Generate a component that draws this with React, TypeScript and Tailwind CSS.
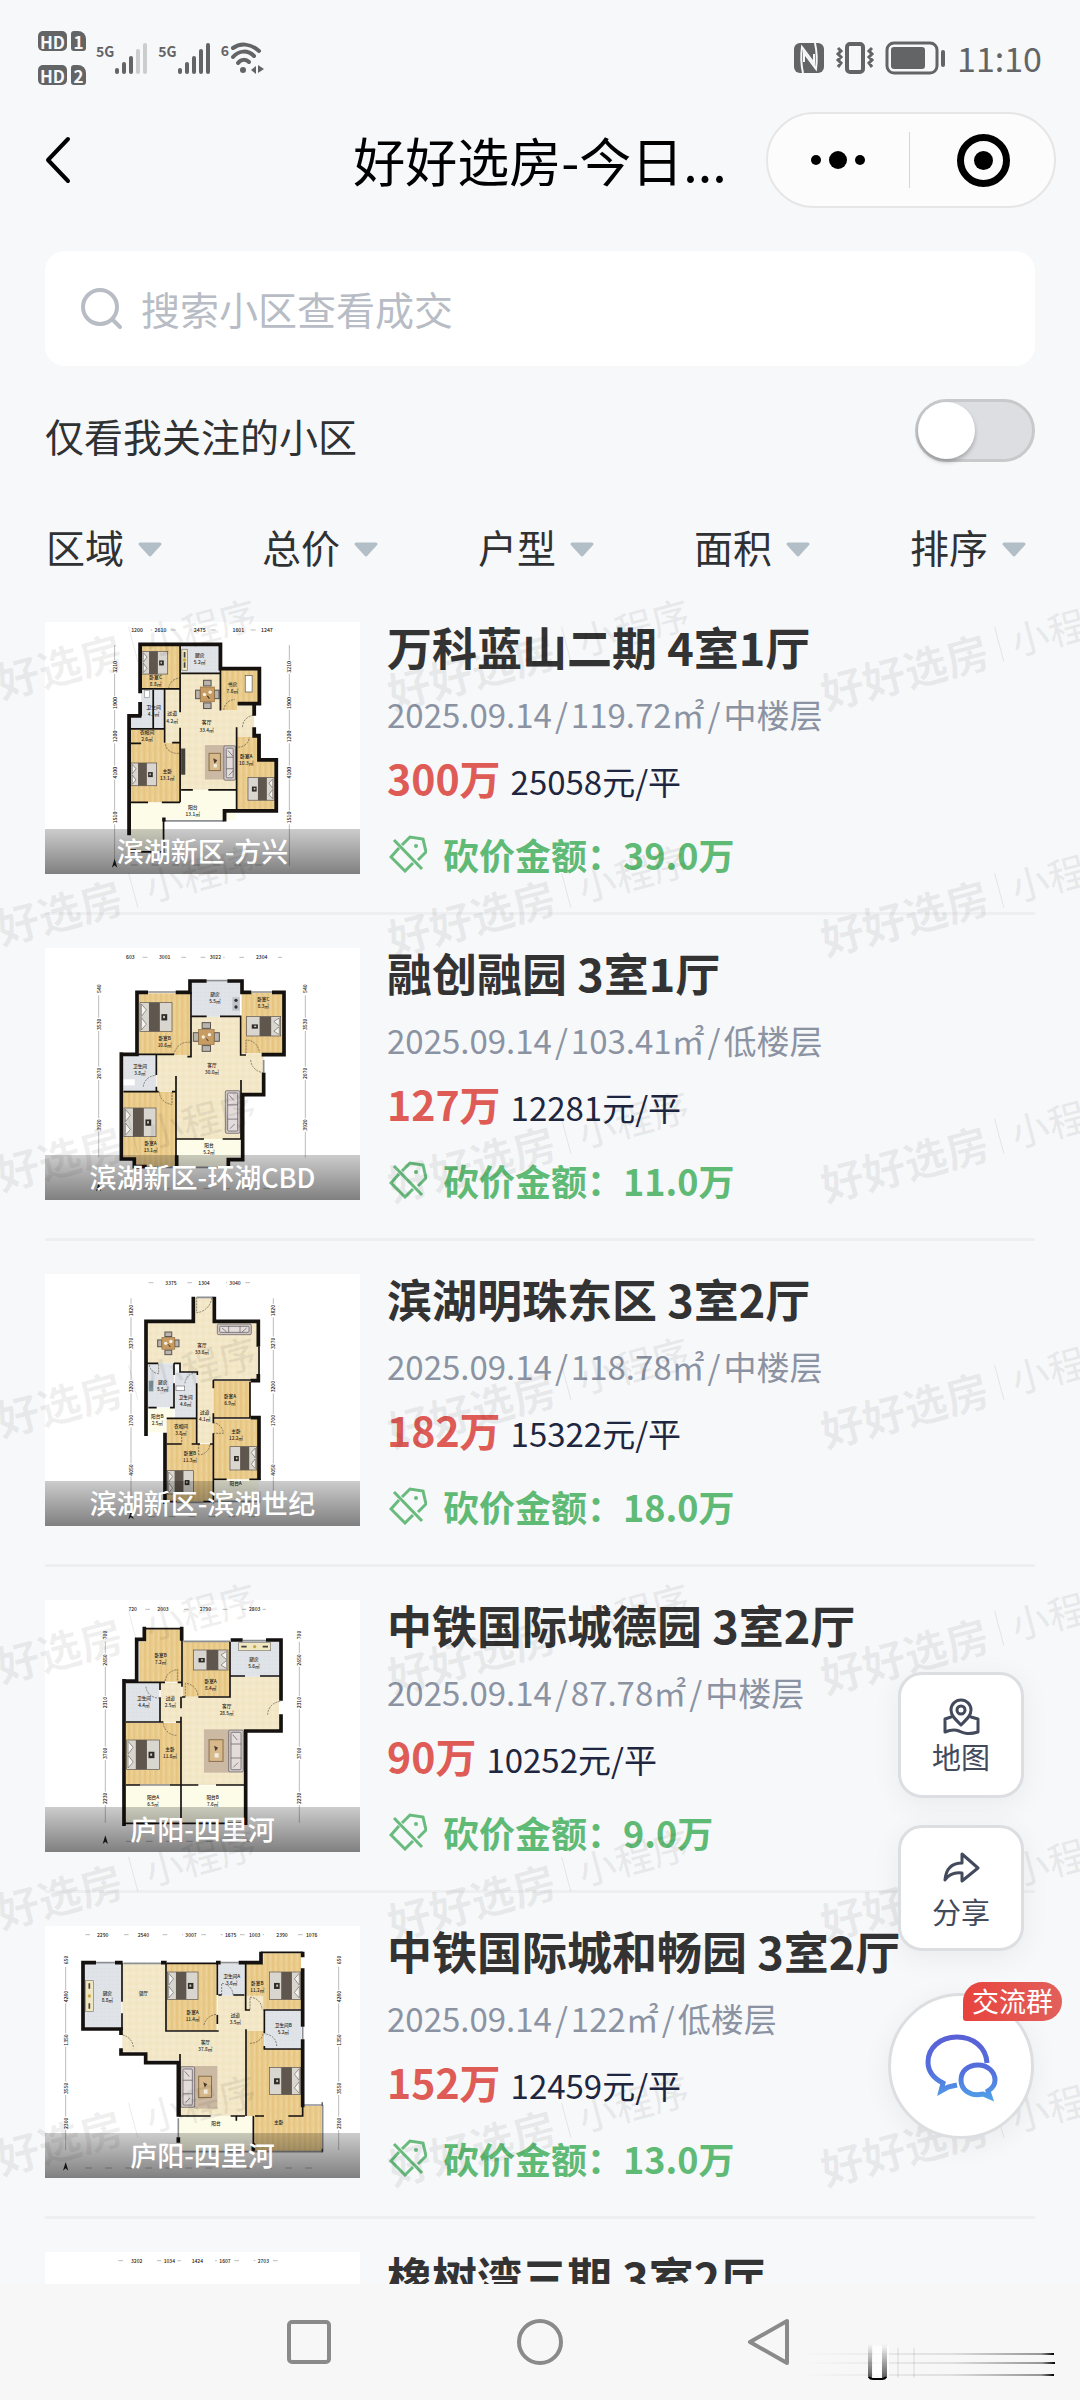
import { useState } from "react"
import type { ReactNode } from "react"

interface Label {
	x: number
	y: number
	name: string
	area: string
}

interface Dimensions {
	topY: number
	topX: [number, number]
	top: [number, string][]
	sideY: [number, number]
	leftX: number
	rightX: number
	side: [number, string][]
	bottomY: number
}

interface Plan {
	viewBox: string
	wood: string
	cream: string
	tile: string
	balcony: string
	walls: string
	partitions: string
	windows: string
	doors: string
	labels: Label[]
	dims: Dimensions
	furniture: ReactNode
}

interface Listing {
	id: number
	title: string
	date: string
	area: string
	floor: string
	price: string
	unitPrice: string
	discount: string
	district: string
	plan?: Plan
}

interface PieceProps {
	x: number
	y: number
	w: number
	h: number
	flip?: boolean
}

/* ---------- floor plan furniture ---------- */

function Bed({ x, y, w, h, flip }: PieceProps) {
	return (
		<g transform={flip ? `translate(${x + w} ${y}) scale(-1 1)` : `translate(${x} ${y})`}>
			<rect width={w} height={h} fill="#d9d6d0" stroke="#57504a" strokeWidth="2" />
			<rect x={w * 0.28} width={w * 0.34} height={h} fill="#5f564e" />
			<path d={`M4 4 L${w * 0.2} ${h * 0.25} L4 ${h * 0.48} Z`} fill="#f5f3ef" stroke="#6b655f" strokeWidth="2" />
			<path d={`M4 ${h * 0.52} L${w * 0.2} ${h * 0.75} L4 ${h - 4} Z`} fill="#f5f3ef" stroke="#6b655f" strokeWidth="2" />
			<rect x={w * 0.67} y={h * 0.4} width={w * 0.18} height={h * 0.22} fill="#2f2b28" />
			<rect x={w * 0.72} y={h * 0.46} width={w * 0.06} height={h * 0.08} fill="#c9c4bc" />
		</g>
	)
}

function Sofa({ x, y, w, h }: PieceProps) {
	const tall = h > w
	return (
		<g transform={`translate(${x} ${y})`} stroke="#5a5356" strokeWidth="2" fill="#cfc6c6">
			<rect width={w} height={h} rx="4" />
			<rect x="7" y="7" width={w - 14} height={h - 14} rx="3" fill="#e3dcdb" />
			{tall ? (
				<path d={`M7 ${h / 3} H${w - 6} M7 ${(h * 2) / 3} H${w - 6} M12 14 l14 16 M14 ${h - 14} l14 -14`} />
			) : (
				<path d={`M${w / 3} 7 V${h - 6} M${(w * 2) / 3} 7 V${h - 6} M14 12 l14 12 M${w - 14} 12 l-14 12`} />
			)}
		</g>
	)
}

function DiningTable({ x, y, w, h }: PieceProps) {
	return (
		<g transform={`translate(${x} ${y})`}>
			<g fill="#b9b4ad" stroke="#5a5450" strokeWidth="3">
				<rect x={w * 0.34} y="0" width={w * 0.32} height={h * 0.2} />
				<rect x={w * 0.34} y={h * 0.8} width={w * 0.32} height={h * 0.2} />
				<rect x="0" y={h * 0.35} width={w * 0.2} height={h * 0.3} />
				<rect x={w * 0.8} y={h * 0.35} width={w * 0.2} height={h * 0.3} />
			</g>
			<rect x={w * 0.2} y={h * 0.24} width={w * 0.6} height={h * 0.52} fill="#c69c62" stroke="#8f6c3f" strokeWidth="2" />
			<circle cx={w * 0.38} cy={h * 0.5} r="5" fill="#f7f1e4" />
			<circle cx={w * 0.62} cy={h * 0.42} r="5" fill="#f7f1e4" />
			<path d={`M${w * 0.5} ${h * 0.55} l6 8`} stroke="#3d3328" strokeWidth="3" />
		</g>
	)
}

function Rug({ x, y, w, h }: PieceProps) {
	return (
		<g transform={`translate(${x} ${y})`}>
			<rect width={w} height={h} fill="#cbb9a3" />
			<rect x={w * 0.2} y={h * 0.24} width={w * 0.55} height={h * 0.5} fill="#d7b98c" stroke="#8a704a" strokeWidth="3" />
			<path d={`M${w * 0.4} ${h * 0.38} l12 6 l-8 10 z`} fill="#4a3c30" />
			<rect x={w * 0.42} y={h * 0.55} width={w * 0.16} height={h * 0.1} fill="#f2ebdf" />
		</g>
	)
}

function Counter({ x, y, w, h }: PieceProps) {
	return (
		<g transform={`translate(${x} ${y})`}>
			<rect width={w} height={h} fill="#f0e6c0" stroke="#7b7a74" strokeWidth="2" />
			<circle cx={w / 2} cy={h / 2} r="5" fill="#c7a94e" />
			<path d={w > h ? `M8 ${h / 2} h16 M${w - 24} ${h / 2} h16` : `M${w / 2} 8 v16 M${w / 2} ${h - 24} v16`} stroke="#44423e" strokeWidth="5" />
		</g>
	)
}

/* ---------- floor plans ---------- */

const vankePlan: Plan = {
	viewBox: "131 703 914 731",
	wood: "M408 768h115v128h-115z M640 840h112v100h-62v18h-50z M380 1015h95v38h48v173h-143z M688 1035h65v70h50v145h-115z",
	cream: "M523 852h117v106h48v-13h50v90h-50v155h-165v-137h-45v-157h45z",
	tile: "M526 768h112v84h-112z M410 900h68v112h-98v-37h30z",
	balcony: "M526 1190h160v86h-211v90h-95v-138h146z",
	walls: "M411 975H375V1322 M407 975V935 M407 910V768H640V838H753V940H690 M738 975V945 M738 1008V1033H752V1103H802V1251H652V1282 M471 1276h10 M375 1368h20",
	partitions:
		"M523 768V965 M410 897H523 M526 852H640 M640 838V960 M478 897V1053 M445 900V1013 M375 1013H480 M380 1055H410 M500 1053H523 M523 1010V1226 M380 1226H430 M470 1226H523 M526 1190H560 M605 1190H687 M687 1008V1250 M475 1276V1370H395",
	windows: "M435 768h58 M560 768h50 M475 1280H650 M725 1250h50",
	doors: "M490 896a32 32 0 0 1 32 -30 M704 1008a34 34 0 0 1 34 -34 M480 1058a36 30 0 0 0 40 26 M650 958a32 32 0 0 1 32 -30 M692 1066a32 32 0 0 0 32 -28",
	labels: [
		{ x: 452, y: 867, name: "卧室C", area: "8.8㎡" },
		{ x: 580, y: 804, name: "厨房", area: "5.2㎡" },
		{ x: 675, y: 888, name: "书房", area: "7.6㎡" },
		{ x: 446, y: 956, name: "卫生间", area: "4.3㎡" },
		{ x: 500, y: 974, name: "过道", area: "4.2㎡" },
		{ x: 600, y: 1000, name: "客厅", area: "33.4㎡" },
		{ x: 427, y: 1028, name: "衣帽间", area: "2.6㎡" },
		{ x: 486, y: 1140, name: "主卧", area: "13.1㎡" },
		{ x: 715, y: 1098, name: "卧室A", area: "10.3㎡" },
		{ x: 560, y: 1246, name: "阳台", area: "13.1㎡" },
	],
	dims: {
		topY: 726,
		topX: [380, 800],
		top: [[398, "1200"], [466, "2610"], [580, "2475"], [692, "1601"], [775, "1247"]],
		sideY: [770, 1410],
		leftX: 333,
		rightX: 840,
		side: [[833, "3210"], [938, "1900"], [1035, "1200"], [1140, "4100"], [1270, "1510"]],
		bottomY: 1408,
	},
	furniture: (
		<>
			<Bed x={412} y={788} w={75} h={66} />
			<Bed x={380} y={1112} w={75} h={66} />
			<Bed x={720} y={1154} w={76} h={66} flip />
			<DiningTable x={568} y={872} w={68} h={82} />
			<Rug x={595} y={1060} w={60} h={100} />
			<Sofa x={650} y={1062} w={34} h={100} />
			<rect x={526} y={1070} width={12} height={76} fill="#44403c" />
			<rect x={712} y={858} width={20} height={48} fill="#fff" stroke="#555" strokeWidth="2" />
			<Counter x={528} y={782} w={16} h={62} />
			<rect x={420} y={902} width={14} height={20} fill="#fff" stroke="#999" strokeWidth="2" />
		</>
	),
}

const sunacPlan: Plan = {
	viewBox: "135 84 945 756",
	wood: "M415 220h157v185h-157z M725 218h125v182h-125z M370 515h158v225h-120v-25h-38z",
	cream: "M575 290h148v110h68v120h-66v137h-195v-142h-60v-110h105z",
	tile: "M575 185h145v105h-145z M368 405h100v108h-100z",
	balcony: "M532 657h190v60h-35v25h-155z",
	walls: "M364 397V717H403V740H440 M364 403H411V217H444 M527 217H570V183H620 M682 183H726V217H754 M816 217H852V404H785 M791 458V524H728V719H685V740 M530 706V740",
	partitions:
		"M573 217V410H562 M575 289H620 M660 289H722V405H738 M410 403H522 M469 405V465 M469 500V515 M370 515H476 M516 515H528 M528 468V740 M723 480V657 M530 657H612 M668 657H723",
	windows: "M444 216h83 M620 182h62 M754 216h62 M440 742H530 M575 742H685 M791 420v40",
	doors: "M522 405a42 42 0 0 1 48 -38 M738 400V360a40 40 0 0 1 40 38 M752 420a42 40 0 0 0 40 38 M430 500a40 36 0 0 1 38 -34 M478 515a40 38 0 0 0 38 38V515",
	labels: [
		{ x: 494, y: 360, name: "卧室B", area: "10.6㎡" },
		{ x: 645, y: 228, name: "厨房", area: "5.5㎡" },
		{ x: 790, y: 243, name: "卧室C", area: "8.3㎡" },
		{ x: 420, y: 444, name: "卫生间", area: "3.8㎡" },
		{ x: 636, y: 442, name: "客厅", area: "30.0㎡" },
		{ x: 452, y: 676, name: "卧室A", area: "13.1㎡" },
		{ x: 627, y: 680, name: "阳台", area: "5.2㎡" },
	],
	dims: {
		topY: 112,
		topX: [370, 846],
		top: [[391, "603"], [494, "3001"], [646, "3022"], [785, "2304"]],
		sideY: [195, 712],
		leftX: 296,
		rightX: 916,
		side: [[206, "540"], [313, "3530"], [460, "2070"], [615, "3920"]],
		bottomY: 806,
	},
	furniture: (
		<>
			<Bed x={420} y={248} w={96} h={86} />
			<Bed x={740} y={290} w={102} h={58} flip />
			<Bed x={372} y={564} w={96} h={86} />
			<DiningTable x={580} y={308} w={78} h={86} />
			<Sofa x={676} y={512} w={44} h={128} />
			<rect x={697} y={232} width={22} height={40} fill="#bfc4cb" />
			<circle cx={708} cy={241} r="5" fill="#333" />
			<circle cx={708} cy={261} r="5" fill="#333" />
			<rect x={370} y={478} width={34} height={18} fill="#fff" />
		</>
	),
}

const mingzhuPlan: Plan = {
	viewBox: "135 72 945 756",
	wood: "M640 392h110v112h-110z M640 508h135v180h-135z M500 505h90v77h48v173h-138z",
	cream: "M583 142h58v73h134v172h-135v193h-50v-215h-50v-25h-98v-125h141z",
	tile: "M442 340h80v132h-80z M525 368h65v135h-65z",
	balcony: "M445 475h75v30h-22v42h-53z M640 690h135v62h-135z",
	walls: "M438 558V214H580V140 M643 140V214H775V290 M775 372V392H752 M752 503H777V690 M495 548V762",
	partitions:
		"M777 290V375 M640 390H770 M750 395V503 M640 504H752 M640 390V415 M640 490V520 M640 550V760 M440 340H475 M522 340V375 M522 340H540V366H592V375 M522 400V473H510 M590 400V505H500 M445 473H470 M500 582H545 M575 582H590V505 M590 582H600 M630 582H640 M500 755H530 M610 755H640 M640 688H680 M748 688H782 M778 725V760",
	windows: "M590 142h50 M530 757h80 M640 754H778",
	doors: "M590 142V188a50 48 0 0 0 45 -45 M640 518a34 34 0 0 1 30 32H640 M555 400a34 34 0 0 1 34 -32 M596 615V582 M630 585a36 36 0 0 1 -32 30 M545 552V582 M448 345a30 30 0 0 0 28 26V342",
	labels: [
		{ x: 606, y: 290, name: "客厅", area: "33.6㎡" },
		{ x: 488, y: 402, name: "厨房", area: "5.5㎡" },
		{ x: 557, y: 448, name: "卫生间", area: "4.6㎡" },
		{ x: 614, y: 492, name: "过道", area: "4.1㎡" },
		{ x: 690, y: 444, name: "卧室A", area: "6.9㎡" },
		{ x: 472, y: 504, name: "阳台B", area: "2.5㎡" },
		{ x: 543, y: 534, name: "衣帽间", area: "3.8㎡" },
		{ x: 708, y: 548, name: "主卧", area: "12.2㎡" },
		{ x: 570, y: 614, name: "卧室B", area: "11.3㎡" },
		{ x: 707, y: 706, name: "阳台A", area: "" },
	],
	dims: {
		topY: 98,
		topX: [446, 772],
		top: [[513, "3375"], [612, "1304"], [705, "3040"]],
		sideY: [145, 740],
		leftX: 393,
		rightX: 820,
		side: [[182, "1820"], [280, "3270"], [410, "3200"], [512, "1700"], [660, "4050"]],
		bottomY: 800,
	},
	furniture: (
		<>
			<DiningTable x={473} y={246} w={64} h={68} />
			<Sofa x={652} y={222} w={102} h={32} />
			<Bed x={690} y={590} w={80} h={70} flip />
			<Bed x={502} y={662} w={78} h={70} />
			<rect x={446} y={392} width={14} height={32} fill="#7d9098" />
			<rect x={528} y={408} width={26} height={14} fill="#fff" stroke="#777" strokeWidth="2" />
		</>
	),
}

const deyuanPlan: Plan = {
	viewBox: "135 60 945 756",
	wood: "M437 148h106v157h-125v-120h19z M548 185h140v165h-140z M378 428h165v187h-165z",
	cream: "M482 308h63v42h147v-60h145v160h-102v165h-190v-189h-63z",
	tile: "M692 183h145v107h-145z M378 308h100v118h-100z",
	balcony: "M378 617h163v112h-163z M545 617h190v112h-190z",
	walls: "M372 297V738 M368 303H410V178H433V140 M545 140V182 M692 180H728 M798 180H843V362 M843 403V453H737V735",
	partitions:
		"M433 146H545 M546 180V310 M690 185V351H595 M546 351H556 M546 320V308 M692 288H735 M780 288H840 M378 307H495 M533 307H545 M480 307V330 M480 352V426 M378 426H490 M528 426H545 M543 350V385 M543 410V735 M378 615H420 M510 615H595 M648 615H735 M372 730H737",
	windows: "M550 184H690 M728 182h70 M420 615h90 M385 303h20",
	doors: "M495 303a40 38 0 0 1 38 -34V303 M556 350V310a40 40 0 0 1 38 38 M438 320a38 36 0 0 0 40 34 M803 404a42 40 0 0 1 40 -40 M490 428a40 38 0 0 0 40 38",
	labels: [
		{ x: 482, y: 230, name: "卧室B", area: "7.2㎡" },
		{ x: 762, y: 244, name: "厨房", area: "5.6㎡" },
		{ x: 632, y: 308, name: "卧室A", area: "8.4㎡" },
		{ x: 432, y: 360, name: "卫生间", area: "4.4㎡" },
		{ x: 511, y: 360, name: "过道", area: "2.5㎡" },
		{ x: 680, y: 384, name: "客厅", area: "28.5㎡" },
		{ x: 510, y: 514, name: "主卧", area: "11.6㎡" },
		{ x: 459, y: 656, name: "阳台A", area: "6.5㎡" },
		{ x: 638, y: 656, name: "阳台B", area: "7.6㎡" },
	],
	dims: {
		topY: 88,
		topX: [378, 838],
		top: [[398, "720"], [489, "2003"], [616, "2790"], [764, "2803"]],
		sideY: [155, 728],
		leftX: 316,
		rightX: 898,
		side: [[165, "700"], [240, "2650"], [368, "2310"], [520, "3700"], [655, "2230"]],
		bottomY: 784,
	},
	furniture: (
		<>
			<Bed x={580} y={210} w={104} h={60} flip />
			<Bed x={380} y={480} w={98} h={88} />
			<Rug x={612} y={448} w={76} h={130} />
			<Sofa x={686} y={450} w={44} h={126} />
			<Counter x={716} y={188} w={96} h={24} />
		</>
	),
}

const hechangPlan: Plan = {
	viewBox: "135 78 945 756",
	wood: "M500 192h150v200h-150z M790 160h113v168h-165v-136h52z M740 392h52v55h113v171h60v135h-205v-105h-20z",
	cream: "M367 190h131v205h155v-108h137v105h-54v255h-196v-167h-103v-25h-70z",
	tile: "M252 190h112v192h-112z M655 192h80v95h-80z M793 332h110v113h-110z",
	balcony: "M540 648h217v103h-217z",
	walls: "M288 188H249V387H363V405 M345 188H368 M363 445V462H437V488H535V650 M483 188H500 M648 188H662 M716 188H783V155 M908 155V172 M908 205V380 M908 418V622 M535 712V728 M965 612H968 M965 752H968 M760 730V752",
	partitions:
		"M783 157H908 M366 190V270 M366 305V270 M366 340V390 M500 190H650 M498 190V393H656 M652 190V285 M652 345V372 M655 285H665 M700 285H733 M737 190V330H750 M790 330H908 M738 388V648 M793 332V400 M793 438V447H908 M540 462V650 M540 648H632 M692 648H735 M709 648V662 M760 648V752 M765 648H792 M865 648H908V620",
	windows: "M288 188h57 M370 190H483 M662 188h54 M535 655V712 M540 755H965 M968 615V755 M910 615H965 M908 380v38",
	doors: "M368 405a40 40 0 0 1 32 40 M612 375a42 38 0 0 1 40 -32 M665 285V250a36 36 0 0 1 34 34 M750 328V292a36 36 0 0 1 36 36 M830 438a36 36 0 0 0 -36 -36 M750 430a40 36 0 0 0 40 -30",
	labels: [
		{ x: 322, y: 284, name: "厨房", area: "8.8㎡" },
		{ x: 430, y: 286, name: "餐厅", area: "" },
		{ x: 578, y: 342, name: "卧室A", area: "11.4㎡" },
		{ x: 695, y: 234, name: "卫生间A", area: "3.6㎡" },
		{ x: 772, y: 254, name: "卧室B", area: "11.2㎡" },
		{ x: 706, y: 350, name: "过道", area: "3.5㎡" },
		{ x: 850, y: 380, name: "卫生间B", area: "5.2㎡" },
		{ x: 616, y: 432, name: "客厅", area: "37.8㎡" },
		{ x: 648, y: 676, name: "阳台", area: "" },
		{ x: 836, y: 672, name: "主卧", area: "" },
	],
	dims: {
		topY: 104,
		topX: [256, 960],
		top: [[308, "2290"], [430, "2540"], [573, "3007"], [692, "1675"], [764, "1003"], [846, "2390"], [935, "1076"]],
		sideY: [162, 750],
		leftX: 197,
		rightX: 1016,
		side: [[180, "650"], [290, "4280"], [420, "1350"], [565, "3550"], [670, "2300"]],
		bottomY: 804,
	},
	furniture: (
		<>
			<Bed x={502} y={216} w={92} h={82} />
			<Bed x={808} y={216} w={94} h={82} flip />
			<Bed x={808} y={502} w={94} h={82} flip />
			<Rug x={582} y={498} w={70} h={128} />
			<Sofa x={542} y={500} w={42} h={122} />
			<Counter x={256} y={242} w={24} h={92} />
		</>
	),
}

const xiangshuPlan: Plan = {
	viewBox: "135 78 945 756",
	wood: "",
	cream: "",
	tile: "",
	balcony: "",
	walls: "",
	partitions: "",
	windows: "",
	doors: "",
	labels: [],
	dims: {
		topY: 104,
		topX: [355, 858],
		top: [[410, "3202"], [508, "1034"], [592, "1424"], [675, "1607"], [790, "2703"]],
		sideY: [250, 700],
		leftX: 300,
		rightX: 900,
		side: [],
		bottomY: 804,
	},
	furniture: null,
}

function FloorPlan({ plan }: { plan: Plan }) {
	const { dims } = plan
	return (
		<svg viewBox={plan.viewBox} className="block size-full" aria-hidden="true">
			<defs>
				<pattern id="wood" width="16" height="40" patternUnits="userSpaceOnUse">
					<rect width="16" height="40" fill="#ebcd90" />
					<rect width="6" height="40" fill="#e6c580" />
					<rect x="11" width="2" height="26" fill="#f0d7a0" />
				</pattern>
				<pattern id="cream" width="20" height="20" patternUnits="userSpaceOnUse">
					<rect width="20" height="20" fill="#f4e9cb" />
					<path d="M0 10 L10 0 L20 10 L10 20 Z" fill="#f1e5c3" />
				</pattern>
				<pattern id="tile" width="12" height="12" patternUnits="userSpaceOnUse">
					<rect width="12" height="12" fill="#e0e3e7" />
					<path d="M0 0H12M0 0V12" stroke="#d4d8dd" strokeWidth="1" />
				</pattern>
			</defs>

			{/* Dimension lines */}
			<g stroke="#9a9a9a" strokeWidth="2">
				<path d={`M${dims.topX[0]} ${dims.topY}H${dims.topX[1]}`} strokeDasharray="14 44" />
				<path d={`M${dims.topX[0]} ${dims.bottomY}H${dims.topX[1]}`} strokeDasharray="20 40" />
				<path d={`M${dims.leftX} ${dims.sideY[0]}V${dims.sideY[1]}`} />
				<path d={`M${dims.rightX} ${dims.sideY[0]}V${dims.sideY[1]}`} />
			</g>
			<g fill="#222" fontSize="15" textAnchor="middle" fontWeight="500">
				{dims.top.map(([x, value]) => (
					<g key={x}>
						<rect x={x - 24} y={dims.topY - 10} width="48" height="20" fill="#fff" />
						<text x={x} y={dims.topY + 6}>{value}</text>
					</g>
				))}
				{dims.side.map(([y, value]) =>
					[dims.leftX, dims.rightX].map((x) => (
						<g key={`${x}-${y}`} transform={`translate(${x} ${y}) rotate(-90)`}>
							<rect x="-20" y="-9" width="40" height="18" fill="#fff" />
							<text y="6">{value}</text>
						</g>
					)),
				)}
			</g>
			<path d={`M${dims.leftX} ${dims.bottomY - 18}l8 26l-8 -7l-8 7z`} fill="#222" />

			<path d={plan.wood} fill="url(#wood)" />
			<path d={plan.cream} fill="url(#cream)" />
			<path d={plan.tile} fill="url(#tile)" />
			<path d={plan.balcony} fill="#fcfce9" />
			{plan.furniture}
			<path d={plan.doors} fill="none" stroke="#5b5346" strokeWidth="2" strokeDasharray="6 3" />
			<path d={plan.windows} fill="none" stroke="#8c8f94" strokeWidth="5" />
			<path d={plan.partitions} fill="none" stroke="#14110f" strokeWidth="5" />
			<path d={plan.walls} fill="none" stroke="#14110f" strokeWidth="11" strokeLinejoin="miter" />
			<g fill="#2a2620" fontSize="14" textAnchor="middle" fontWeight="500">
				{plan.labels.map((label) => (
					<g key={`${label.x}-${label.y}`}>
						<text x={label.x} y={label.y}>{label.name}</text>
						{label.area && <text x={label.x} y={label.y + 21}>{label.area}</text>}
					</g>
				))}
			</g>
		</svg>
	)
}

/* ---------- data ---------- */

const listings: Listing[] = [
	{ id: 1, title: "万科蓝山二期 4室1厅", date: "2025.09.14", area: "119.72㎡", floor: "中楼层", price: "300万", unitPrice: "25058元/平", discount: "39.0万", district: "滨湖新区-方兴", plan: vankePlan },
	{ id: 2, title: "融创融园 3室1厅", date: "2025.09.14", area: "103.41㎡", floor: "低楼层", price: "127万", unitPrice: "12281元/平", discount: "11.0万", district: "滨湖新区-环湖CBD", plan: sunacPlan },
	{ id: 3, title: "滨湖明珠东区 3室2厅", date: "2025.09.14", area: "118.78㎡", floor: "中楼层", price: "182万", unitPrice: "15322元/平", discount: "18.0万", district: "滨湖新区-滨湖世纪", plan: mingzhuPlan },
	{ id: 4, title: "中铁国际城德园 3室2厅", date: "2025.09.14", area: "87.78㎡", floor: "中楼层", price: "90万", unitPrice: "10252元/平", discount: "9.0万", district: "庐阳-四里河", plan: deyuanPlan },
	{ id: 5, title: "中铁国际城和畅园 3室2厅", date: "2025.09.14", area: "122㎡", floor: "低楼层", price: "152万", unitPrice: "12459元/平", discount: "13.0万", district: "庐阳-四里河", plan: hechangPlan },
	{ id: 6, title: "橡树湾三期 3室2厅", date: "", area: "", floor: "", price: "", unitPrice: "", discount: "", district: "", plan: xiangshuPlan },
]

const filters = ["区域", "总价", "户型", "面积", "排序"]

/* ---------- status bar ---------- */

function SimBadge({ slot }: { slot: string }) {
	return (
		<div className="flex items-center gap-1">
			<span className="flex h-5 w-[29px] items-center justify-center rounded-[5px] bg-[#636465] text-[17px] leading-none font-bold text-[#f7f8fa]">
				HD
			</span>
			<span className="flex h-5 w-[15px] items-center justify-center rounded-[3px] rounded-tr-[8px] bg-[#636465] text-[17px] leading-none font-bold text-[#f7f8fa]">
				{slot}
			</span>
		</div>
	)
}

function Signal({ level }: { level: number }) {
	const heights = [6, 12, 18, 25, 31]
	return (
		<div className="flex items-start">
			<span className="text-[14px] leading-4 font-bold">5G</span>
			<svg width="34" height="31" viewBox="0 0 34 31" aria-hidden="true">
				{heights.map((h, i) => (
					<rect key={h} x={i * 7 + 1} y={31 - h} width="4" height={h} rx="2" fill={i < level ? "#636465" : "#cccdce"} />
				))}
			</svg>
		</div>
	)
}

function StatusBar() {
	return (
		<div className="flex h-28 items-center justify-between px-[38px] pt-1 text-[#636465]">
			<div className="flex items-center gap-[10px]">
				<div className="flex flex-col gap-[14px]">
					<SimBadge slot="1" />
					<SimBadge slot="2" />
				</div>
				<Signal level={3} />
				<Signal level={5} />
				<div className="flex items-start">
					<span className="text-[14px] leading-4 font-bold">6</span>
					<svg width="36" height="32" viewBox="0 0 36 32" fill="none" stroke="#636465" strokeWidth="4" strokeLinecap="round" aria-hidden="true">
						<path d="M4 6C11 1 21 1 30 9" />
						<path d="M4 15C10 8 19 8 25 14" />
						<path d="M9 21C12 17 17 17 20 20" />
						<circle cx="14" cy="28" r="3" fill="#636465" stroke="none" />
						<path d="M27 24V32L22 28ZM29 23V31L35 27Z" fill="#636465" stroke="none" />
					</svg>
				</div>
			</div>

			<div className="flex items-center gap-[10px]">
				<svg width="32" height="32" viewBox="0 0 32 32" aria-hidden="true">
					<rect x="1" y="1" width="30" height="30" rx="6" fill="#636465" />
					<path d="M10 31C8 22 8 12 9 5L21 21V12M22 1C24 10 24 20 23 27L11 11V20" fill="none" stroke="#f7f8fa" strokeWidth="2" />
				</svg>
				<svg width="40" height="32" viewBox="0 0 40 32" fill="none" stroke="#636465" aria-hidden="true">
					<rect x="12" y="2" width="16" height="28" rx="3" strokeWidth="4" />
					<path d="M3 6l3 3l-3 3l3 3l-3 3l3 3l-3 4M37 6l-3 3l3 3l-3 3l3 3l-3 3l3 4" strokeWidth="3" />
				</svg>
				<svg width="62" height="34" viewBox="0 0 62 34" aria-hidden="true">
					<rect x="2" y="2" width="50" height="30" rx="7" fill="none" stroke="#636465" strokeWidth="3" />
					<rect x="6" y="6" width="34" height="22" rx="3" fill="#636465" />
					<rect x="56" y="9" width="4" height="17" rx="2" fill="#636465" />
				</svg>
				<span className="text-[34px] leading-10">11:10</span>
			</div>
		</div>
	)
}

/* ---------- header ---------- */

function Header() {
	return (
		<header className="grid h-24 grid-cols-[1fr_auto_1fr] items-center px-6">
			<button type="button" aria-label="返回" className="flex size-17 items-center justify-center justify-self-start">
				<svg width="26" height="48" viewBox="0 0 26 48" fill="none" stroke="#000" strokeWidth="4" strokeLinecap="round" strokeLinejoin="round" aria-hidden="true">
					<path d="M23 3L3 24L23 45" />
				</svg>
			</button>
			<h1 className="text-[52px] leading-[64px] text-black">好好选房-今日...</h1>
			<div className="flex h-24 w-[290px] items-center justify-self-end rounded-full border-2 border-[#e6e6e7] bg-[#fcfcfd]">
				<button type="button" aria-label="更多" className="flex flex-1 items-center justify-center gap-2">
					<span className="size-[10px] rounded-full bg-black" />
					<span className="size-[18px] rounded-full bg-black" />
					<span className="size-[10px] rounded-full bg-black" />
				</button>
				<span className="h-14 w-px bg-[#d5d5d6]" />
				<button type="button" aria-label="关闭" className="flex flex-1 items-center justify-center pl-1">
					<span className="flex size-[53px] items-center justify-center rounded-full border-[7px] border-black">
						<span className="size-[19px] rounded-full bg-black" />
					</span>
				</button>
			</div>
		</header>
	)
}

function SearchBox() {
	const [keyword, setKeyword] = useState("")
	return (
		<label className="mx-[45px] mt-[43px] flex h-[115px] items-center gap-[18px] rounded-[20px] bg-white pr-6 pl-9">
			<svg width="42" height="42" viewBox="0 0 42 42" fill="none" stroke="#b8bcc5" strokeWidth="4" strokeLinecap="round" aria-hidden="true">
				<circle cx="19" cy="19" r="17" />
				<path d="M32 32L39 39" />
			</svg>
			<input
				type="text"
				aria-label="搜索小区"
				placeholder="搜索小区查看成交"
				value={keyword}
				onChange={(e) => setKeyword(e.target.value)}
				className="min-w-0 flex-1 bg-transparent pb-[2px] text-[39px] leading-[56px] text-[#333] outline-none placeholder:text-[#b8bcc5]"
			/>
		</label>
	)
}

function FollowToggle() {
	const [followed, setFollowed] = useState(false)
	return (
		<div className="mx-[45px] mt-[33px] flex items-start justify-between">
			<label htmlFor="followed" className="pt-2 text-[39px] leading-[56px] text-[#303133]">
				仅看我关注的小区
			</label>
			<input
				id="followed"
				type="checkbox"
				role="switch"
				checked={followed}
				onChange={(e) => setFollowed(e.target.checked)}
				className="h-[63px] w-[120px] appearance-none rounded-full border-[3px] border-[#c8c9cb] bg-[#dddee2] before:block before:size-[57px] before:rounded-full before:bg-white before:shadow-[0_3px_4px_rgba(0,0,0,0.25)] checked:bg-[#5cb974] checked:before:translate-x-[57px]"
			/>
		</div>
	)
}

function FilterBar() {
	return (
		<div className="mt-[55px] grid grid-cols-5 pb-[26px]">
			{filters.map((name) => (
				<button key={name} type="button" className="flex items-center gap-[13px] pl-[46px] text-[39px] leading-[56px] text-[#303133]">
					{name}
					<svg width="26" height="16" viewBox="0 0 26 16" className="mt-2" aria-hidden="true">
						<path d="M3 2H23L13 13Z" fill="#b3bfc7" stroke="#b3bfc7" strokeWidth="3" strokeLinejoin="round" />
					</svg>
				</button>
			))}
		</div>
	)
}

/* ---------- list ---------- */

function TagIcon() {
	return (
		<svg width="38" height="38" viewBox="0 0 38 38" fill="none" stroke="#68bb7d" strokeWidth="3" aria-hidden="true">
			<path d="M13 10L21 2L34 4L37 17L29 25" />
			<path d="M10 13L2 22L16 36L24 28" />
			<path d="M5 5L33 34" />
			<circle cx="27" cy="11" r="2" fill="#68bb7d" stroke="none" />
		</svg>
	)
}

function ListingCard({ listing }: { listing: Listing }) {
	return (
		<li className="mb-[33px] flex gap-[27px] border-b-[3px] border-[#eeeff1] pb-[38px]">
			<div className="relative h-[252px] w-[315px] shrink-0 overflow-hidden bg-white">
				{listing.plan && <FloorPlan plan={listing.plan} />}
				<div className="absolute inset-x-0 bottom-0 h-[45px] bg-linear-to-b from-black/20 to-black/50 text-center text-[27px] leading-[43px] font-medium text-white">
					{listing.district}
				</div>
			</div>
			<div className="min-w-0 flex-1">
				<h2 className="text-[45px] leading-[50px] font-bold whitespace-nowrap text-[#333]">{listing.title}</h2>
				{listing.date && (
					<>
						<p className="mt-[22px] flex gap-[3px] text-[33px] leading-10 text-[#8b93a3]">
							<span>{listing.date}</span>
							<span>/</span>
							<span>{listing.area}</span>
							<span>/</span>
							<span>{listing.floor}</span>
						</p>
						<p className="mt-[19px] flex h-12 items-baseline gap-[10px] leading-[48px]">
							<span className="text-[41px] font-bold text-[#de5b56]">{listing.price}</span>
							<span className="text-[33px] text-[#1e2640]">{listing.unitPrice}</span>
						</p>
						<p className="mt-[33px] flex items-center pl-[2px] text-[36px] leading-10 font-bold text-[#5fba76]">
							<TagIcon />
							<span className="pl-4">砍价金额：{listing.discount}</span>
						</p>
					</>
				)}
			</div>
		</li>
	)
}

/* Repeated diagonal brand mark laid over the list */
function Watermark() {
	const rows = [0, 1, 2, 3, 4, 5, 6]
	const cols = [0, 1, 2]
	return (
		<div className="pointer-events-none absolute inset-0 overflow-hidden select-none" aria-hidden="true">
			{rows.map((row) =>
				cols.map((col) => (
					<div
						key={`${row}-${col}`}
						className="absolute flex origin-left -rotate-15 items-center gap-3 whitespace-nowrap text-black/6"
						style={{ left: col * 433 - 45, top: row * 246 + 64 }}
					>
						<span className="text-[43px] leading-[56px] font-bold">好好选房</span>
						<span className="h-9 w-px bg-black/8" />
						<span className="text-[38px] leading-[56px] font-medium">小程序</span>
					</div>
				)),
			)}
		</div>
	)
}

/* ---------- floating actions ---------- */

function FloatingActions() {
	const square =
		"flex h-[126px] w-[126px] flex-col items-center justify-center rounded-[24px] border-[3px] border-[#dddee1] bg-white pt-1 text-[29px] leading-10 text-[#434a5c] shadow-[0_6px_30px_rgba(0,0,0,0.06)]"
	return (
		<div className="absolute right-[46px] bottom-[145px] flex flex-col items-center">
			<button type="button" className={square}>
				<svg width="38" height="38" viewBox="0 0 38 38" fill="none" stroke="#434a5c" strokeWidth="3" strokeLinejoin="round" strokeLinecap="round" aria-hidden="true">
					<path d="M19 27C12 20 9 17 9 12A10 10 0 0 1 29 12C29 17 26 20 19 27Z" />
					<circle cx="19" cy="12" r="4" />
					<path d="M9 19L3 21V34C8 32 12 31 17 33S26 37 36 34V21L29 19" />
				</svg>
				地图
			</button>
			<button type="button" className={`${square} mt-[27px] gap-1`}>
				<svg width="38" height="38" viewBox="0 0 38 38" fill="none" stroke="#434a5c" strokeWidth="3" strokeLinejoin="round" aria-hidden="true">
					<path d="M20 5L36 19L20 32V24C12 23 7 25 3 31C4 20 10 14 20 14Z" />
				</svg>
				分享
			</button>
			<button
				type="button"
				aria-label="交流群"
				className="relative mt-[42px] flex size-[146px] items-center justify-center rounded-full border-[3px] border-[#dddee1] bg-white pt-1 shadow-[0_6px_30px_rgba(0,0,0,0.06)]"
			>
				<svg width="74" height="68" viewBox="0 0 74 68" fill="none" stroke="url(#chat)" strokeWidth="5" aria-hidden="true">
					<defs>
						<linearGradient id="chat" x1="0" y1="0" x2="0" y2="68" gradientUnits="userSpaceOnUse">
							<stop offset="0" stopColor="#5a5fd6" />
							<stop offset="0.55" stopColor="#5470dc" />
							<stop offset="1" stopColor="#4fa4ea" />
						</linearGradient>
					</defs>
					<path d="M63 29C62 13 49 3 33 3C16 3 4 14 4 28C4 38 9 44 19 49L17 57L24 53L33 51" />
					<path d="M64 57L66 63L59 60C45 63 37 55 37 46C37 37 44 31 54 31S71 38 71 46C71 51 69 54 64 57Z" />
				</svg>
				<span className="absolute -top-[14px] -right-[31px] h-[39px] rounded-[20px] rounded-bl-[3px] bg-linear-to-r from-[#e8423d] to-[#e2605b] px-[9px] text-[27px] leading-[37px] whitespace-nowrap text-white">
					交流群
				</span>
			</button>
		</div>
	)
}

function NavigationBar() {
	return (
		<nav className="relative flex h-[116px] shrink-0 items-center justify-center gap-[180px] bg-[#f7f7f7]">
			<button type="button" aria-label="最近任务">
				<svg width="50" height="50" viewBox="0 0 50 50" fill="none" stroke="#8a8a8a" strokeWidth="4" aria-hidden="true">
					<rect x="4" y="5" width="40" height="40" rx="3" />
				</svg>
			</button>
			<button type="button" aria-label="主屏幕">
				<svg width="50" height="50" viewBox="0 0 50 50" fill="none" stroke="#8a8a8a" strokeWidth="4" aria-hidden="true">
					<circle cx="25" cy="25" r="21" />
				</svg>
			</button>
			<button type="button" aria-label="返回上一页">
				<svg width="50" height="50" viewBox="0 0 50 50" fill="none" stroke="#8a8a8a" strokeWidth="4" strokeLinejoin="round" aria-hidden="true">
					<path d="M42 4V46L5 25Z" />
				</svg>
			</button>
			<svg width="260" height="42" viewBox="0 0 260 42" className="absolute right-[22px] bottom-[18px]" aria-hidden="true">
				<defs>
					<linearGradient id="streak" x1="0" x2="1" y1="0" y2="0">
						<stop offset="0" stopColor="#000" stopOpacity="0" />
						<stop offset="0.6" stopColor="#000" stopOpacity="0.1" />
						<stop offset="0.95" stopColor="#000" stopOpacity="0.4" />
						<stop offset="1" stopColor="#000" />
					</linearGradient>
					<linearGradient id="drip" x1="0" x2="0" y1="0" y2="1">
						<stop offset="0" stopColor="#000" stopOpacity="0" />
						<stop offset="1" stopColor="#000" stopOpacity="0.65" />
					</linearGradient>
				</defs>
				<rect x="2" y="13" width="254" height="2" fill="url(#streak)" />
				<rect x="2" y="22" width="255" height="2" fill="url(#streak)" />
				<rect x="2" y="34" width="254" height="2" fill="url(#streak)" />
				<rect x="75" y="6" width="16" height="30" fill="#fff" opacity="0.7" />
				<rect x="70" y="4" width="4" height="34" fill="url(#drip)" />
				<rect x="84" y="4" width="5" height="34" fill="url(#drip)" />
				<path d="M71 37Q72 39 75 39H84Q87 39 88 37" fill="none" stroke="#000" strokeWidth="2" />
				<path d="M100 8V38M116 8V38" stroke="#000" strokeOpacity="0.06" strokeWidth="2" />
			</svg>
		</nav>
	)
}

export default function App() {
	return (
		<div className="flex h-screen flex-col overflow-hidden bg-[#f7f8fa] font-['Noto_Sans_CJK_SC','Noto_Sans',sans-serif]">
			<StatusBar />
			<Header />
			<SearchBox />
			<FollowToggle />
			<FilterBar />
			<main className="relative min-h-0 flex-1 overflow-hidden">
				<ul className="mx-[45px] pt-[22px]">
					{listings.map((listing) => (
						<ListingCard key={listing.id} listing={listing} />
					))}
				</ul>
				<Watermark />
				<FloatingActions />
			</main>
			<NavigationBar />
		</div>
	)
}
